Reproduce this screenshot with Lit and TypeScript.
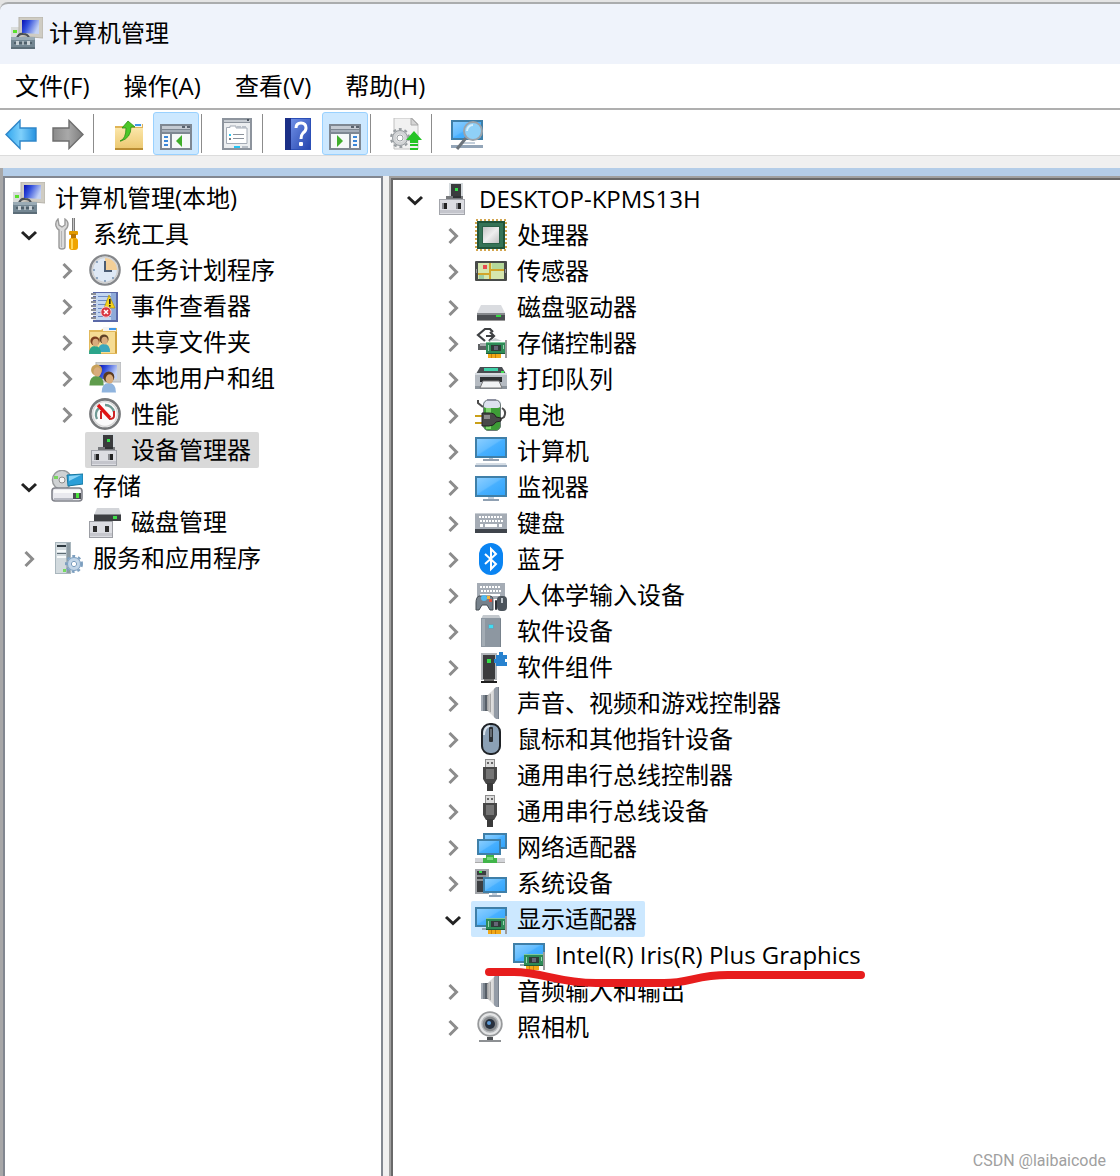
import { LitElement, html, svg, css, nothing, type TemplateResult } from 'lit';
import { customElement, state } from 'lit/decorators.js';
import { classMap } from 'lit/directives/class-map.js';

interface TreeNode {
  id: string;
  label: string;
  icon: string;
  children?: TreeNode[];
  /** The node can be expanded but its children are not loaded yet. */
  lazy?: boolean;
  marked?: boolean;
}

interface Tool {
  label: string;
  icon: string;
  pressed?: boolean;
}

const r = (x: number, y: number, w: number, h: number, fill: string, rx = 0) =>
  svg`<rect x=${x} y=${y} width=${w} height=${h} rx=${rx} fill=${fill} />`;

const p = (d: string, fill: string, stroke = 'none', width = 1) =>
  svg`<path d=${d} fill=${fill} stroke=${stroke} stroke-width=${width} />`;

const c = (x: number, y: number, radius: number, fill: string, stroke = 'none', width = 1) =>
  svg`<circle cx=${x} cy=${y} r=${radius} fill=${fill} stroke=${stroke} stroke-width=${width} />`;

const screen = (x: number, y: number, w: number, h: number) =>
  svg`<rect x=${x + 1} y=${y + 1} width=${w - 2} height=${h - 2} fill="url(#sky)" stroke="#3f7fa8" stroke-width="2" />`;

const gear = (x: number, y: number, radius: number, fill: string, edge: string) => svg`
  <circle cx=${x} cy=${y} r=${radius} fill="none" stroke=${edge} stroke-width="4" stroke-dasharray="2.6 2.6" />
  <circle cx=${x} cy=${y} r=${radius - 2} fill="none" stroke=${fill} stroke-width="4" />
  <circle cx=${x} cy=${y} r=${radius - 0.5} fill="none" stroke=${edge} stroke-width="1" />
  <circle cx=${x} cy=${y} r=${radius * 0.38} fill="#fff" stroke=${edge} stroke-width="1" />`;

const person = (x: number, y: number, hair: string, shirt: string) => svg`
  <path d="M${x - 6} ${y + 14}q0 -8 6 -8t6 8z" fill=${shirt} />
  <circle cx=${x} cy=${y + 1} r="4.6" fill=${hair} />
  <ellipse cx=${x + 0.6} cy=${y + 2.6} rx="3.2" ry="3.8" fill="#d9ac7c" />`;

const card = (x: number, y: number) => svg`
  ${r(x, y + 2, 19, 12, '#2e8b57')}${r(x, y + 2, 19, 1, '#7fc79c')}${r(x, y + 13, 19, 1, '#1d5c3a')}
  ${r(x + 5, y + 5, 10, 6, '#2f3b38')}${r(x + 8, y + 6, 4, 4, '#667')}
  ${r(x + 2, y + 5, 1, 6, '#9ad6b2')}${r(x + 17, y + 5, 1, 4, '#9ad6b2')}
  ${r(x + 2, y + 14, 13, 4, '#f0a818')}${r(x + 5, y + 14, 1, 4, '#c97d08')}${r(x + 9, y + 14, 1, 4, '#c97d08')}
  ${r(x + 19, y, 2, 18, '#9b9b9b')}`;

const keys = (x: number, y: number, n: number) =>
  Array.from({ length: n }, (_, i) => svg`
    ${r(x + i * 3, y, 2, 2, '#fff')}${r(x + 1 + i * 3, y + 4, 2, 2, '#fff')}`);

const deviceIcon = svg`
  ${r(12, 0, 14, 14, '#d5dadd')}${r(14, 1, 10, 13, '#3a3b3d')}${r(18, 5, 3, 3, '#35e04a')}
  ${r(9, 13, 17, 3, '#77797c')}${r(16, 13, 8, 2, '#303234')}
  ${r(2, 16, 26, 16, '#a3a5ab')}${r(3, 17, 24, 14, '#dcdde2')}${r(3, 27, 24, 3, '#c4c5cc')}
  ${r(5, 20, 2, 6, '#8b8d92')}${r(7, 20, 3, 6, '#222')}${r(19, 20, 2, 6, '#8b8d92')}${r(21, 20, 3, 6, '#222')}`;

const speakerIcon = svg`
  ${r(6, 8, 7, 16, '#7b848e')}${r(6, 8, 2, 16, '#a6adb6')}${r(10, 8, 3, 16, '#575f68')}
  ${p('M12 9L20 1V31L12 23Z', 'url(#cone)')}${p('M19 2L21 0H24V32H21L19 30Z', '#939ba6')}
  ${r(15, 7, 1, 18, '#a5a5a5')}${r(23, 0, 1, 32, '#77808b')}`;

const ICONS: Record<string, TemplateResult> = {
  manage: svg`
    ${r(0, 10, 9, 11, '#d9dcdb')}${r(2, 13, 4, 3, '#5be02e')}
    ${p('M8 0H32V21L8 19Z', '#cfccc3', '#b5b2a9')}${p('M11 3L28 3V17L11 16Z', 'url(#deep)')}
    ${p('M6 21Q8 16 12 17Q17 17 18 21', 'none', '#4a5056', 2.2)}
    ${r(0, 20, 24, 12, '#748793', 1)}${r(0, 20, 24, 3, '#9aabb5', 1)}${r(0, 30, 24, 2, '#5c6d78')}
    ${r(3, 25, 18, 2, '#4f5f6a')}${r(5, 24, 3, 4, '#c9d1d6')}${r(11, 24, 2, 4, '#a8b4bb')}${r(16, 24, 3, 4, '#c9d1d6')}`,
  tools: svg`
    ${p('M7 1Q4 4 5 8Q6 11 8 12V29Q8 31 11 31Q14 31 14 29V12Q17 10 17 6Q17 3 14 1V7L11 9L8 7Z', '#dadada', '#9a9a9a', 1.4)}
    ${r(10, 13, 1, 16, '#b5b5b5')}
    ${r(21, 0, 3, 14, '#7a7a7a')}${r(22, 0, 1, 14, '#c4c4c4')}
    ${r(18, 13, 9, 4, '#e29b00', 1)}${r(20, 16, 5, 4, '#b97400')}${r(18, 20, 9, 12, '#f0a500', 3)}${r(20, 21, 2, 10, '#ffd657')}`,
  clock: svg`
    ${c(16, 16, 14.6, '#dde6f0', '#85878a', 2.4)}${c(16, 16, 12.6, '#dfe9f5', '#d3d3d3', 1.6)}
    ${p('M16 16V4A12 12 0 0 1 28 16Z', '#f4cf97')}
    ${p('M16 7V17H23', 'none', '#4c5d74', 2)}
    ${[[16, 27], [5, 16], [8, 8], [8, 24], [24, 24]].map(([x, y]) => c(x, y, 0.9, '#6c89ab'))}`,
  events: svg`
    ${r(4, 2, 25, 30, '#5a69a8')}${r(7, 3, 20, 27, '#c3d6f0')}
    ${[6, 10, 14, 18, 22, 26].map((y) => r(9, y, 18, 1, '#6c8ac4'))}${r(22, 3, 5, 27, '#8fabd9')}
    ${[3, 7, 11, 15, 19, 23, 27].map((y) => svg`${r(2, y, 5, 2, '#8c8f96')}${r(4, y + 2, 3, 1, '#e6e8ec')}`)}
    ${p('M20 5L26 18H15Z', '#f5d21c', '#a88a00', 0.6)}${r(20, 9, 1.6, 5, '#222')}${r(20, 15, 1.6, 1.6, '#222')}
    ${c(17, 22, 5.2, '#d93742', '#f3c9cd', 1)}${p('M15 20L19 24M19 20L15 24', 'none', '#fff', 1.5)}`,
  shared: svg`
    ${p('M0 4H12L15 2H28V28H0Z', '#e2b95c')}${r(14, 1, 13, 4, '#f4f4f4')}${r(20, 2, 7, 2, '#3f97e8')}
    ${r(1, 6, 26, 21, '#f6dc94')}${r(26, 6, 2, 21, '#d0a23e')}
    ${person(15, 12, '#5e4025', '#3aa7bd')}${person(6, 14, '#7b3d1d', '#2ba58a')}`,
  users: svg`
    ${p('M7 0H32V20H7Z', '#cfd2d4', '#b2b5b8')}${r(10, 3, 18, 14, 'url(#deep)')}
    <g transform="translate(-2 -4) scale(1.2)">${person(8, 9, '#c8a15a', '#5f9c4c')}</g>
    <g transform="translate(-3 -3) scale(1.2)">${person(19, 14, '#5b3a1e', '#8fb4de')}</g>`,
  perf: svg`
    ${c(16, 16, 14.6, '#fff', '#77797b', 2.6)}${c(16, 16, 12.4, '#fbfbfb', '#d8d8d8', 1.4)}
    ${p('M8 21A9 9 0 0 1 10 10M16 7A9 9 0 0 1 25 14', 'none', '#6f9a94', 2.4)}
    ${p('M9 7L21 20', 'none', '#e01414', 3.4)}${p('M12 13V21M25 13V18Q25 21 20 21', 'none', '#c22', 2)}`,
  device: deviceIcon,
  storage: svg`
    ${c(11, 10, 9.6, '#cfd2d4', '#96999c', 1.4)}${c(11, 10, 3, '#f6f6f6', '#8c8c8c', 1)}${r(3, 6, 4, 3, '#79d65f')}
    ${p('M16 5L32 4V14L17 16Z', '#2c9fd8', '#16779f')}${p('M18 6L30 5L18 11Z', '#8ad4f6')}
    ${r(1, 18, 30, 13, '#e9e9ee', 3)}<rect x="1" y="18" width="30" height="13" rx="3" fill="none" stroke="#80828a" stroke-width="1.6" />
    ${r(3, 20, 26, 3, '#fafafa')}${r(22, 23, 8, 6, '#4a4d52')}${r(25, 23, 3, 5, '#4be23d')}${r(3, 28, 19, 2, '#b9bbc4')}`,
  diskmgmt: svg`
    ${p('M8 2H30L32 9H5Z', '#d3d5d9')}${r(5, 8, 27, 7, '#3d3f42')}${r(5, 8, 27, 1, '#85888c')}${r(24, 10, 4, 3, '#3fdd49')}
    ${r(0, 15, 24, 17, '#9c9ea4')}${r(1, 16, 22, 15, '#dcdde2')}${r(1, 27, 22, 3, '#c6c7cd')}
    ${r(4, 20, 4, 6, '#2b2b2b')}${r(16, 20, 4, 6, '#2b2b2b')}`,
  services: svg`
    ${r(4, 0, 16, 32, '#a9b6bd')}${r(5, 1, 10, 30, '#d2dade')}${r(16, 1, 3, 30, '#8d9ba3')}
    ${r(6, 3, 9, 2, '#2f3a41')}${r(6, 8, 9, 2, '#f7fafb')}${r(6, 11, 9, 1, '#5e6c74')}${r(6, 14, 9, 2, '#f7fafb')}
    ${r(12, 27, 3, 3, '#76da62')}
    ${gear(23, 22, 7, '#c1d5e8', '#7d9fbf')}`,
  cpu: svg`
    <rect x="1" y="1" width="30" height="30" fill="none" stroke="#d3a64f" stroke-width="2" stroke-dasharray="2 2" />
    ${r(2, 2, 28, 28, '#20533a')}${r(4, 4, 24, 24, '#357356')}${r(7, 7, 18, 18, '#2b6148')}${r(8, 8, 16, 16, 'url(#silver)')}`,
  sensor: svg`
    ${r(0, 6, 32, 20, '#484b49', 1)}${r(3, 8, 26, 16, '#d5e6ae')}${r(17, 8, 12, 7, '#b4d89a')}
    ${r(4, 20, 5, 4, '#9fcda3')}${p('M3 19H15V15H29M15 8V24', 'none', '#d1a52b', 2)}${r(8, 10, 4, 4, '#e94b50')}
    ${r(1, 14, 1, 4, '#999')}${r(30, 14, 1, 4, '#999')}`,
  disk: svg`
    ${p('M6 14H26L30 22H2Z', '#dadce0')}${r(2, 22, 28, 8, '#4b4e52')}${r(2, 22, 28, 2, '#85888c')}${r(2, 29, 28, 1, '#999')}
    ${r(21, 24, 5, 2, '#35d843')}`,
  controller: svg`
    ${p('M3 17H13V23H3Z', '#5d6063')}${p('M5 16H12V19H5Z', '#a9acaf')}
    ${p('M18 5L15 2H10L3 8L10 14', 'none', '#3d3f42', 2.2)}${p('M11 9H19M15 5L19 9L14 14', 'none', '#3d3f42', 2.2)}
    ${p('M14 14L20 11L27 14', '#c9ccd0')}
    ${card(11, 13)}`,
  printer: svg`
    ${p('M5 4H27L31 11H1Z', '#494d52')}${r(9, 5, 14, 3, '#3fd2a9')}${r(26, 8, 3, 2, '#41e252')}
    ${r(0, 11, 32, 14, '#b5bbc2', 1)}${r(0, 10, 32, 2, '#d5dadf')}${r(0, 23, 32, 3, '#8b939b')}
    ${r(5, 14, 22, 5, '#2d3033')}${p('M8 18H24L27 25H5Z', '#f1f3f4', '#777')}`,
  battery: svg`
    ${r(8, 3, 18, 29, '#3d9c36', 6)}${r(11, 9, 5, 21, '#7fd66e')}${r(8, 1, 18, 8, '#dde1ee', 4)}
    <rect x="8.5" y="1" width="17" height="30.5" rx="5" fill="none" stroke="#6c7a78" stroke-width="1" />${r(12, 0, 9, 2, '#8d90a0')}
    ${p('M3 1V4L8 8M27 9Q32 12 29 18L24 21', 'none', '#4b4b4b', 2)}
    ${r(0, 16, 8, 2, '#caa018')}${r(0, 23, 8, 2, '#caa018')}
    ${p('M7 14H14Q20 14 21 18L26 19V22L21 23Q19 27 14 27H7Z', '#484848', '#222')}${r(9, 16, 6, 4, '#8d8d8d')}`,
  computer: svg`
    ${screen(0, 2, 32, 21)}${r(14, 23, 4, 2, '#b9c4cf')}${r(8, 24, 16, 2, '#93a1b1')}${p('M1 28H31L32 32H0Z', '#d5dde5')}${r(0, 30, 32, 2, '#93a5b8')}`,
  monitor: svg`${screen(0, 5, 32, 21)}${r(13, 26, 6, 2, '#c3cfdb')}${r(8, 28, 16, 2, '#8fa0b2')}`,
  keyboard: svg`
    ${r(0, 6, 32, 17, '#a5acb5')}${r(0, 6, 32, 1, '#c9ced4')}${keys(4, 9, 8)}${r(5, 17, 3, 3, '#fff')}${r(10, 17, 12, 3, '#fff')}${r(24, 17, 3, 3, '#fff')}
    ${r(0, 22, 32, 4, '#3f444b')}`,
  bluetooth: svg`
    ${r(4, 0, 24, 32, '#0a84f2', 12)}
    ${p('M10 11L21 21L16 26V6L21 11L10 21', 'none', '#fff', 2)}`,
  hid: svg`
    ${r(2, 4, 28, 16, '#a5acb5')}${keys(5, 7, 7)}${r(5, 15, 20, 2, '#fff')}
    ${p('M4 17H15Q18 17 18 22V31H15L12 26H7L4 31H1V24Q1 18 4 17Z', '#76818b', '#454c53')}
    ${c(9, 19, 3, '#52b9ee')}${r(12, 17, 3, 3, '#f1b63a')}${r(14, 20, 3, 3, '#e2513f')}
    ${r(22, 17, 10, 15, '#4c545c', 4)}${r(26, 19, 2, 5, '#c3c9cf')}${r(20, 21, 2, 10, '#2c3136', 1)}`,
  softdev: svg`
    ${p('M8 0H24L26 4H6Z', '#c4c9ce')}${r(6, 3, 20, 29, '#8d97a1')}${r(7, 4, 3, 27, '#a3acb4')}${r(25, 4, 1, 28, '#78828c')}
    ${r(13, 9, 6, 5, '#6f9fb2')}${r(14, 10, 4, 3, '#3fdcf2')}`,
  softcomp: svg`
    ${r(6, 2, 16, 27, '#b3b7bb')}${r(8, 4, 12, 24, '#3b3c3e')}${r(12, 8, 4, 4, '#35e04a')}${r(6, 30, 16, 2, '#1e1e1e')}${r(9, 28, 10, 2, '#666')}
    ${p('M21 4H24V1H28V4H32V8H30V11H32V15H21V12H19V8H21Z', '#2782cf')}`,
  speaker: speakerIcon,
  mouse: svg`
    ${r(6, 1, 20, 30, '#8ba0b5', 9)}
    <rect x="7" y="1" width="18" height="30" rx="8" fill="none" stroke="#1f2226" stroke-width="2" />
    ${p('M9 12Q9 4 15 3', 'none', '#dbe4ec', 2)}${r(14, 4, 4, 15, '#2b2e32', 1)}${r(15, 6, 2, 8, '#666c73')}`,
  usb: svg`
    ${r(10, 0, 10, 9, '#8d8d8d')}${r(11, 1, 8, 8, '#dcdcdc')}${r(12, 3, 2, 2, '#666')}${r(16, 3, 2, 2, '#666')}
    ${p('M8 8H22V20L19 25H11L8 20Z', '#474747')}${r(11, 10, 8, 10, '#757575')}${r(12, 24, 6, 8, '#3a3a3a')}`,
  network: svg`
    ${screen(8, 2, 24, 16)}${screen(2, 8, 24, 16)}
    ${r(0, 27, 30, 4, '#d2d4d8')}${r(0, 31, 30, 1, '#aaa')}
    ${p('M11 24H19V27H22V32H8V27H11Z', '#41b549')}${r(12, 26, 6, 3, '#7ad97c')}`,
  system: svg`
    ${r(0, 2, 14, 25, '#a2a5a9')}${r(2, 4, 9, 21, '#3c3e41')}${r(4, 4, 3, 2, '#35e04a')}${r(2, 8, 9, 2, '#8b8e92')}${r(2, 12, 9, 2, '#8b8e92')}
    ${screen(8, 10, 24, 16)}${r(17, 26, 5, 2, '#c3cfdb')}${r(14, 28, 12, 2, '#8fa0b2')}`,
  display: svg`${screen(0, 4, 32, 20)}${r(7, 25, 8, 2, '#9aa9ba')}${card(11, 13)}`,
  camera: svg`
    ${r(12, 26, 6, 5, '#4e5154')}${r(4, 29, 22, 2, '#8d9093')}
    ${c(15, 13, 11.8, '#e4e5e6', '#97999b', 1.8)}${c(15, 13, 8, '#85888b', '#b2b5b8', 1.4)}${c(15, 13, 5, '#27303d')}${c(14, 12, 2, '#5d9ad6')}`,

  back: p('M1 16.5L15 2.5V10H31V23H15V30.5Z', 'url(#azure)', '#2f86c9', 1.4),
  forward: p('M31 16.5L17 2.5V10H1V23H17V30.5Z', 'url(#steel)', '#6e6e6e', 1.4),
  up: svg`
    ${p('M2 8H16L19 6H30V32H2Z', '#dfb456')}${r(17, 6, 12, 3, '#f4f4f4')}${r(22, 6, 6, 2, '#3f97e8')}
    ${r(2, 10, 28, 21, 'url(#folder)')}${r(2, 30, 28, 2, '#b98d33')}
    ${p('M7 23Q13 21 13 10H9L15 3L22 9H18Q18 20 8 23Z', '#4cc728', '#2b8d14', 0.8)}`,
  treePane: svg`
    ${r(0, 6, 32, 26, '#7e8792')}${r(2, 8, 28, 3, '#c4cad2')}${r(22, 8, 3, 2, '#59626e')}${r(27, 8, 3, 2, '#59626e')}${r(2, 12, 28, 2, '#a5adb8')}
    ${r(2, 16, 28, 14, '#f6f8f9')}${r(10, 15, 2, 16, '#7e8792')}
    ${r(4, 18, 4, 2, '#3a86d8')}${r(4, 22, 4, 2, '#3a86d8')}${r(4, 26, 4, 2, '#3a86d8')}${p('M22 17V29L16 23Z', '#3fae2a')}`,
  actionPane: svg`
    ${r(0, 6, 32, 26, '#7e8792')}${r(2, 8, 28, 3, '#c4cad2')}${r(22, 8, 3, 2, '#59626e')}${r(27, 8, 3, 2, '#59626e')}${r(2, 12, 28, 2, '#a5adb8')}
    ${r(2, 16, 28, 14, '#f6f8f9')}${r(20, 15, 2, 16, '#7e8792')}
    ${r(24, 18, 4, 2, '#3a86d8')}${r(24, 22, 4, 2, '#3a86d8')}${r(24, 26, 4, 2, '#3a86d8')}${p('M8 17V29L14 23Z', '#3fae2a')}`,
  properties: svg`
    ${r(1, 0, 30, 32, '#8d949d')}${r(3, 2, 26, 2, '#c7ccd2')}${r(26, 1, 2, 2, '#4b535d')}${r(3, 5, 26, 25, '#eceef0')}
    ${p('M5.5 9.5H9V8H15V10H26V25.5H5.5Z', '#fff', '#a4abb5')}${r(16, 8, 4, 2, '#b9bfc7')}${r(21, 8, 4, 2, '#b9bfc7')}
    ${r(8, 16, 2, 2, '#2fc4f0')}${r(12, 16, 11, 1, '#8b929b')}${r(8, 20, 2, 2, '#777f89')}${r(12, 20, 11, 1, '#8b929b')}
    ${r(13, 28, 6, 2, '#24c3f4')}${r(21, 28, 6, 2, '#b9bfc7')}`,
  help: svg`
    ${r(3, 0, 26, 32, '#2c4fb6')}${r(3, 0, 6, 32, '#1b2f87')}${r(9, 1, 19, 30, 'url(#book)')}
    ${p('M14 10Q14 5 19 5Q24 5 24 10Q24 13 21 15Q19 17 19 21', 'none', '#fff', 3)}${r(17, 24, 4, 4, '#fff', 1)}`,
  update: svg`
    ${p('M4 0H22L28 6V31H4Z', '#f1f1f1', '#c0c0c0')}${p('M21 0V7H28Z', '#d5d5d5', '#aaa')}
    ${gear(10, 20, 8, '#d2d4d6', '#989da1')}
    ${p('M24 13L32 22H28V25H20V22H16Z', '#25c425')}${r(20, 26, 8, 2, '#25c425')}${r(20, 30, 8, 2, '#25c425')}`,
  scan: svg`
    ${screen(0, 2, 32, 20)}${r(0, 27, 32, 3, '#93a5b8')}${r(10, 24, 14, 2, '#c3cfdb')}
    ${p('M15 20L6 31', 'none', '#6c747c', 3)}${c(22, 13, 9, '#8fd0f7', '#9aa3ab', 2)}${p('M16 13A6 6 0 0 1 22 7', 'none', '#d5effd', 2)}`,
};

const MENUS = ['文件(F)', '操作(A)', '查看(V)', '帮助(H)'];

const TOOL_GROUPS: Tool[][] = [
  [{ label: '后退', icon: 'back' }, { label: '前进', icon: 'forward' }],
  [{ label: '上移一级', icon: 'up' }, { label: '显示/隐藏控制台树', icon: 'treePane', pressed: true }],
  [{ label: '属性', icon: 'properties' }],
  [{ label: '帮助', icon: 'help' }, { label: '显示/隐藏操作窗格', icon: 'actionPane', pressed: true }],
  [{ label: '更新驱动程序', icon: 'update' }],
  [{ label: '扫描检测硬件改动', icon: 'scan' }],
];

const CONSOLE_TREE: TreeNode = {
  id: 'root', label: '计算机管理(本地)', icon: 'manage',
  children: [
    {
      id: 'tools', label: '系统工具', icon: 'tools',
      children: [
        { id: 'tasks', label: '任务计划程序', icon: 'clock', lazy: true },
        { id: 'events', label: '事件查看器', icon: 'events', lazy: true },
        { id: 'shared', label: '共享文件夹', icon: 'shared', lazy: true },
        { id: 'users', label: '本地用户和组', icon: 'users', lazy: true },
        { id: 'perf', label: '性能', icon: 'perf', lazy: true },
        { id: 'devmgr', label: '设备管理器', icon: 'device' },
      ],
    },
    {
      id: 'storage', label: '存储', icon: 'storage',
      children: [{ id: 'diskmgmt', label: '磁盘管理', icon: 'diskmgmt' }],
    },
    { id: 'services', label: '服务和应用程序', icon: 'services', lazy: true },
  ],
};

const category = (label: string, icon: string): TreeNode => ({ id: `cat-${label}`, label, icon, lazy: true });

const DEVICE_TREE: TreeNode = {
  id: 'host', label: 'DESKTOP-KPMS13H', icon: 'device',
  children: [
    category('处理器', 'cpu'),
    category('传感器', 'sensor'),
    category('磁盘驱动器', 'disk'),
    category('存储控制器', 'controller'),
    category('打印队列', 'printer'),
    category('电池', 'battery'),
    category('计算机', 'computer'),
    category('监视器', 'monitor'),
    category('键盘', 'keyboard'),
    category('蓝牙', 'bluetooth'),
    category('人体学输入设备', 'hid'),
    category('软件设备', 'softdev'),
    category('软件组件', 'softcomp'),
    category('声音、视频和游戏控制器', 'speaker'),
    category('鼠标和其他指针设备', 'mouse'),
    category('通用串行总线控制器', 'usb'),
    category('通用串行总线设备', 'usb'),
    category('网络适配器', 'network'),
    category('系统设备', 'system'),
    {
      id: 'display', label: '显示适配器', icon: 'display',
      children: [{ id: 'iris', label: 'Intel(R) Iris(R) Plus Graphics', icon: 'display', marked: true }],
    },
    category('音频输入和输出', 'speaker'),
    category('照相机', 'camera'),
  ],
};

@customElement('app-root')
export class AppRoot extends LitElement {
  @state() private open = new Set(['root', 'tools', 'storage', 'host', 'display']);
  @state() private consoleSelection = 'devmgr';
  @state() private deviceSelection = 'display';

  static styles = css`
    :host {
      display: block;
      font-family: 'Open Sans', 'Noto Sans CJK SC', sans-serif;
      font-size: 24px;
      line-height: 36px;
      color: #000;
    }
    * { box-sizing: border-box; }
    button {
      margin: 0;
      padding: 0;
      border: 0;
      background: none;
      font: inherit;
      color: inherit;
      white-space: nowrap;
    }
    ul { list-style: none; margin: 0; padding: 0; }
    svg { display: block; }
    .window {
      position: relative;
      display: flex;
      flex-direction: column;
      min-height: 100vh;
      padding-top: 2px;
      background: #e4e4e4;
    }
    .defs { position: absolute; width: 0; height: 0; }
    .icon { flex: none; width: 32px; height: 32px; }
    .titlebar {
      display: flex;
      align-items: center;
      gap: 6px;
      height: 62px;
      padding: 0 11px 2px;
      border-top: 2px solid #aaacad;
      border-top-left-radius: 8px;
      background: #eff3fb;
    }
    h1 { margin: 0; font-size: 24px; font-weight: 400; }
    .menubar {
      display: flex;
      align-items: center;
      gap: 34px;
      height: 46px;
      padding: 0 15px;
      border-bottom: 2px solid #afafaf;
      background: #fff;
    }
    .toolbar {
      display: flex;
      align-items: flex-end;
      height: 46px;
      border-bottom: 1px solid #dcdcdc;
      background: #fff;
    }
    .group { display: flex; gap: 1px; }
    .group:first-child { margin-left: -2px; }
    .group + .group::before {
      content: '';
      width: 1px;
      margin: 2px 11px 2px 2px;
      background: #8c8c8c;
    }
    .tool {
      display: grid;
      place-items: center;
      width: 46px;
      height: 43px;
      padding-top: 1px;
      border: 1px solid transparent;
      border-radius: 3px;
    }
    .tool.pressed { border-color: #99d1ff; background: #cce8ff; }
    .spacer { height: 12px; background: #f0f0f0; }
    .workspace {
      flex: 1;
      display: flex;
      gap: 6px;
      padding-top: 8px;
      border-left: 3px solid #a7a7a8;
      background: linear-gradient(#b4cde8 8px, #f0f0f0 8px);
    }
    .pane { background: #fff; }
    .console {
      flex: none;
      width: 380px;
      padding: 2px 4px;
      border: 2px solid #828790;
      border-bottom: 0;
    }
    .devices {
      flex: 1;
      min-width: 0;
      border: 2px solid #a0a0a0;
      border-width: 2px 0 0 2px;
    }
    .inner {
      height: 100%;
      padding: 1px 4px;
      border: 2px solid #696969;
      border-width: 2px 0 0 2px;
    }
    .row { position: relative; display: flex; height: 36px; }
    .node > ul { padding-left: 38px; }
    .node.bare > ul { padding-left: 2px; }
    .twisty {
      flex: none;
      display: grid;
      place-items: center;
      width: 36px;
      padding-top: 2px;
    }
    .entry {
      display: flex;
      align-items: center;
      gap: 10px;
      padding: 0 8px 0 4px;
      border-radius: 2px;
    }
    .console .selected { background: #d9d9d9; }
    .devices .selected { background: #cce8ff; }
    .mark {
      position: absolute;
      left: 11px;
      top: 28px;
      z-index: 1;
      width: 384px;
      height: 24px;
      pointer-events: none;
    }
    .credit {
      position: absolute;
      right: 14px;
      bottom: 3px;
      font: 16px/24px Roboto, 'Liberation Sans', sans-serif;
      color: #a0a0a0;
    }
  `;

  private icon(name: string) {
    return html`<svg class="icon" viewBox="0 0 32 32" aria-hidden="true">${ICONS[name]}</svg>`;
  }

  private toggle(id: string) {
    const next = new Set(this.open);
    if (!next.delete(id)) next.add(id);
    this.open = next;
  }

  private twisty(node: TreeNode) {
    if (!node.children && !node.lazy) return html`<span class="twisty"></span>`;
    const expanded = this.open.has(node.id) && !!node.children;
    return html`
      <button class="twisty" aria-label=${node.label} aria-expanded=${expanded} @click=${() => this.toggle(node.id)}>
        <svg width="18" height="18" viewBox="0 0 18 18" fill="none" stroke-width="3">
          ${expanded
            ? svg`<path d="M2 6L9 12.5L16 6" stroke="#222" />`
            : svg`<path d="M5.5 2L12.5 9L5.5 16" stroke="#8c8c8c" />`}
        </svg>
      </button>`;
  }

  private node(node: TreeNode, selected: string, select: (id: string) => void, bare = false): TemplateResult {
    const expanded = this.open.has(node.id);
    return html`
      <li class=${classMap({ node: true, bare })}>
        <div class="row">
          ${bare ? nothing : this.twisty(node)}
          <button class=${classMap({ entry: true, selected: node.id === selected })} @click=${() => select(node.id)}>
            ${this.icon(node.icon)}<span>${node.label}</span>
          </button>
          ${node.marked
            ? html`<svg class="mark" viewBox="0 0 384 24" fill="none" stroke="#e71d1d" stroke-width="8" stroke-linecap="round" aria-hidden="true">
                <path d="M5 7H30C58 7 74 18 112 18H180C206 18 212 10 244 10H377" />
              </svg>`
            : nothing}
        </div>
        ${expanded && node.children
          ? html`<ul>${node.children.map((child) => this.node(child, selected, select))}</ul>`
          : nothing}
      </li>`;
  }

  render() {
    return html`
      <div class="window">
        <svg class="defs" aria-hidden="true">
          <linearGradient id="sky" x1="0" y1="0" x2="1" y2="1">
            <stop offset="0" stop-color="#8fd0ff" /><stop offset="0.45" stop-color="#62bcff" />
            <stop offset="0.5" stop-color="#48b0ff" /><stop offset="1" stop-color="#2ea3fb" />
          </linearGradient>
          <linearGradient id="deep" x1="0" y1="0" x2="1" y2="0.4">
            <stop offset="0" stop-color="#0610b4" /><stop offset="0.4" stop-color="#3350dc" /><stop offset="1" stop-color="#c3d2f5" />
          </linearGradient>
          <linearGradient id="silver" x1="0" y1="0" x2="1" y2="1">
            <stop offset="0" stop-color="#c5c5c5" /><stop offset="0.5" stop-color="#eee" /><stop offset="1" stop-color="#c2c2c2" />
          </linearGradient>
          <linearGradient id="cone">
            <stop offset="0" stop-color="#a0a0a0" /><stop offset="0.6" stop-color="#e2e2e2" /><stop offset="1" stop-color="#c0c0c0" />
          </linearGradient>
          <linearGradient id="azure">
            <stop offset="0" stop-color="#2fa6ee" /><stop offset="0.5" stop-color="#7fd0fb" /><stop offset="1" stop-color="#2592e0" />
          </linearGradient>
          <linearGradient id="steel">
            <stop offset="0" stop-color="#8a8a8a" /><stop offset="0.5" stop-color="#a9a9a9" /><stop offset="1" stop-color="#7c7c7c" />
          </linearGradient>
          <linearGradient id="folder" x1="0" y1="0" x2="0" y2="1">
            <stop offset="0" stop-color="#fbe6a9" /><stop offset="1" stop-color="#ecc870" />
          </linearGradient>
          <linearGradient id="book" x1="0" y1="0" x2="1" y2="1">
            <stop offset="0" stop-color="#6f8fe6" /><stop offset="1" stop-color="#2545ae" />
          </linearGradient>
        </svg>
        <header class="titlebar">${this.icon('manage')}<h1>计算机管理</h1></header>
        <nav class="menubar">${MENUS.map((menu) => html`<button>${menu}</button>`)}</nav>
        <div class="toolbar" role="toolbar">
          ${TOOL_GROUPS.map((group) => html`
            <div class="group">
              ${group.map((tool) => html`
                <button class=${classMap({ tool: true, pressed: !!tool.pressed })} aria-label=${tool.label}>
                  ${this.icon(tool.icon)}
                </button>`)}
            </div>`)}
        </div>
        <div class="spacer"></div>
        <main class="workspace">
          <section class="pane console">
            <ul>${this.node(CONSOLE_TREE, this.consoleSelection, (id) => (this.consoleSelection = id), true)}</ul>
          </section>
          <section class="pane devices">
            <div class="inner">
              <ul>${this.node(DEVICE_TREE, this.deviceSelection, (id) => (this.deviceSelection = id))}</ul>
            </div>
          </section>
        </main>
        <div class="credit">CSDN @laibaicode</div>
      </div>`;
  }
}
